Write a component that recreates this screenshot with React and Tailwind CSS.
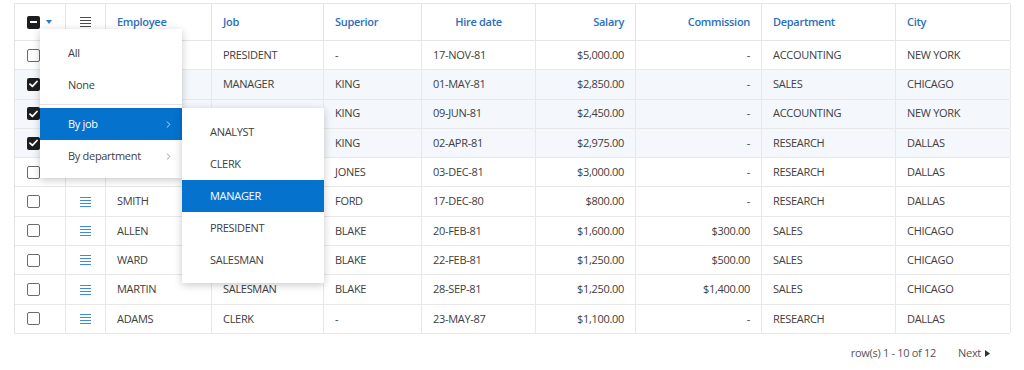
import React from 'react';
import { ChevronRight } from 'lucide-react';

const cols = [
  { key: 'name', label: 'Employee', align: 'left' },
  { key: 'job', label: 'Job', align: 'left' },
  { key: 'mgr', label: 'Superior', align: 'left' },
  { key: 'hired', label: 'Hire date', align: 'center', cellAlign: 'left' },
  { key: 'sal', label: 'Salary', align: 'right' },
  { key: 'comm', label: 'Commission', align: 'right' },
  { key: 'dept', label: 'Department', align: 'left' },
  { key: 'city', label: 'City', align: 'left' },
];

const rows = [
  { name: 'KING', job: 'PRESIDENT', mgr: '-', hired: '17-NOV-81', sal: '$5,000.00', comm: '-', dept: 'ACCOUNTING', city: 'NEW YORK' },
  { name: 'BLAKE', job: 'MANAGER', mgr: 'KING', hired: '01-MAY-81', sal: '$2,850.00', comm: '-', dept: 'SALES', city: 'CHICAGO', sel: true },
  { name: 'CLARK', job: 'MANAGER', mgr: 'KING', hired: '09-JUN-81', sal: '$2,450.00', comm: '-', dept: 'ACCOUNTING', city: 'NEW YORK', sel: true },
  { name: 'JONES', job: 'MANAGER', mgr: 'KING', hired: '02-APR-81', sal: '$2,975.00', comm: '-', dept: 'RESEARCH', city: 'DALLAS', sel: true },
  { name: 'FORD', job: 'ANALYST', mgr: 'JONES', hired: '03-DEC-81', sal: '$3,000.00', comm: '-', dept: 'RESEARCH', city: 'DALLAS' },
  { name: 'SMITH', job: 'CLERK', mgr: 'FORD', hired: '17-DEC-80', sal: '$800.00', comm: '-', dept: 'RESEARCH', city: 'DALLAS' },
  { name: 'ALLEN', job: 'SALESMAN', mgr: 'BLAKE', hired: '20-FEB-81', sal: '$1,600.00', comm: '$300.00', dept: 'SALES', city: 'CHICAGO' },
  { name: 'WARD', job: 'SALESMAN', mgr: 'BLAKE', hired: '22-FEB-81', sal: '$1,250.00', comm: '$500.00', dept: 'SALES', city: 'CHICAGO' },
  { name: 'MARTIN', job: 'SALESMAN', mgr: 'BLAKE', hired: '28-SEP-81', sal: '$1,250.00', comm: '$1,400.00', dept: 'SALES', city: 'CHICAGO' },
  { name: 'ADAMS', job: 'CLERK', mgr: '-', hired: '23-MAY-87', sal: '$1,100.00', comm: '-', dept: 'RESEARCH', city: 'DALLAS' },
];

const grid = 'grid grid-cols-[51px_40px_106px_112px_98px_114px_100px_126px_134px_115px]';

const alignCls = (a) =>
  a === 'right' ? 'justify-end text-right' : a === 'center' ? 'justify-center text-center' : 'justify-start';

const Checkbox = ({ checked }) =>
  checked ? (
    <span className="w-[13px] h-[13px] rounded-[2px] bg-[#1d1d1d] flex items-center justify-center">
      <svg width="9" height="8" viewBox="0 0 9 8">
        <path d="M1 4.2 L3.4 6.4 L8 1.5" stroke="white" strokeWidth="1.8" fill="none" strokeLinecap="round" strokeLinejoin="round" />
      </svg>
    </span>
  ) : (
    <span className="w-[13px] h-[13px] rounded-[2px] border border-[#6b6b6b] bg-white" />
  );

const Lines = ({ color }) => (
  <span className="flex flex-col gap-[2px] w-[11px]">
    <span className={`h-px w-full ${color}`} />
    <span className={`h-px w-full ${color}`} />
    <span className={`h-px w-full ${color}`} />
    <span className={`h-px w-full ${color}`} />
  </span>
);

const MenuItem = ({ label, active, sub }) => (
  <div
    className={`h-[32px] flex items-center justify-between pl-[28px] pr-[8px] ${
      active ? 'bg-[#0572ce] text-white' : 'text-[#404040]'
    }`}
  >
    <span>{label}</span>
    {sub && <ChevronRight size={11} strokeWidth={1.6} className={active ? 'text-white' : 'text-[#777]'} />}
  </div>
);

export default function App() {
  return (
    <div className="relative w-[1024px] h-[370px] bg-white text-[11px] tracking-[-0.3px] text-[#404040] font-['Open_Sans',_'Noto_Sans',_sans-serif] overflow-hidden">
      <div className="pt-[3px] pl-[14px]">
        <div className="w-[996px] border-l border-t border-[#e4e4e4]">
          <div className={`${grid} h-[37px] border-b border-[#e4e4e4]`}>
            <div className="flex items-center pl-[12px] gap-[6px] border-r border-[#e4e4e4]">
              <span className="w-[13px] h-[13px] rounded-[2px] bg-[#1d1d1d] flex items-center justify-center">
                <span className="w-[7px] h-[2px] bg-white" />
              </span>
              <svg width="6" height="4" viewBox="0 0 6 4">
                <path d="M0 0 H6 L3 4 Z" fill="#2b78cf" />
              </svg>
            </div>
            <div className="flex items-center justify-center border-r border-[#e4e4e4]">
              <Lines color="bg-[#4a4a4a]" />
            </div>
            {cols.map((c) => (
              <div
                key={c.key}
                className={`flex items-center px-[11px] font-semibold text-[#2a6fbb] border-r border-[#e4e4e4] ${alignCls(c.align)}`}
              >
                {c.label}
              </div>
            ))}
          </div>
          {rows.map((r, i) => (
            <div
              key={i}
              className={`${grid} h-[29.3px] border-b border-[#e8e8e8] ${r.sel ? 'bg-[#f4f7fb]' : 'bg-white'}`}
            >
              <div className="flex items-center pl-[12px] border-r border-[#e8e8e8]">
                <Checkbox checked={r.sel} />
              </div>
              <div className="flex items-center justify-center border-r border-[#e8e8e8]">
                <Lines color="bg-[#3b8be0]" />
              </div>
              {cols.map((c) => (
                <div
                  key={c.key}
                  className={`flex items-center px-[11px] border-r border-[#e8e8e8] ${alignCls(c.cellAlign || c.align)}`}
                >
                  {r[c.key]}
                </div>
              ))}
            </div>
          ))}
        </div>
        <div className="w-[996px] flex justify-end items-center gap-[22px] pt-[11px] pr-[20px] text-[#555]">
          <span>row(s) 1 - 10 of 12</span>
          <span className="flex items-center gap-[4px]">
            Next
            <svg width="5" height="7" viewBox="0 0 5 7">
              <path d="M0 0 L5 3.5 L0 7 Z" fill="#333" />
            </svg>
          </span>
        </div>
      </div>

      <div className="absolute left-[40px] top-[29px] w-[142px] bg-white shadow-[0_2px_8px_rgba(0,0,0,0.22)] pt-[8px] pb-[6px]">
        <MenuItem label="All" />
        <MenuItem label="None" />
        <div className="h-px bg-[#e3e3e3] my-[3px]" />
        <MenuItem label="By job" active sub />
        <MenuItem label="By department" sub />
      </div>

      <div className="absolute left-[182px] top-[108px] w-[142px] bg-white shadow-[0_2px_8px_rgba(0,0,0,0.22)] pt-[8px] pb-[7px]">
        <MenuItem label="ANALYST" />
        <MenuItem label="CLERK" />
        <MenuItem label="MANAGER" active />
        <MenuItem label="PRESIDENT" />
        <MenuItem label="SALESMAN" />
      </div>
    </div>
  );
}
